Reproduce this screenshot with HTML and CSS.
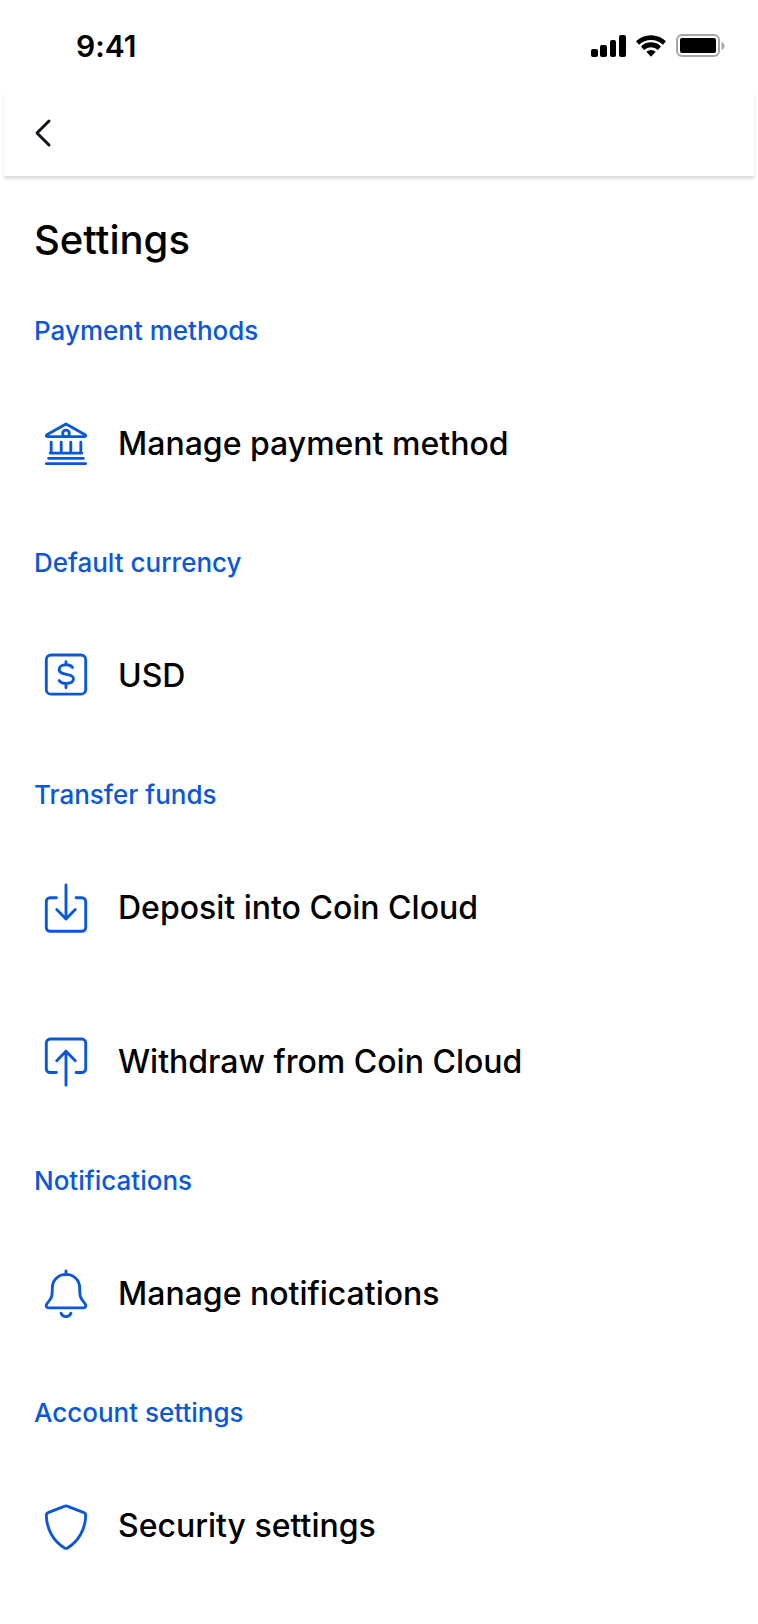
FILE: index.html
```html
<!DOCTYPE html>
<html lang="en">
<head>
    <meta charset="UTF-8">
    <meta name="viewport" content="width=device-width, initial-scale=1.0">
    <title>Settings</title>
    <link rel="stylesheet" href="styles.css">
</head>
<body>
    <div class="status-bar">
        <span class="time">9:41</span>
        <div class="status-icons">
            <svg width="36" height="24" viewBox="0 0 36 24">
                <rect x="1" y="15" width="7" height="8" rx="2"/>
                <rect x="10" y="11" width="7" height="12" rx="2"/>
                <rect x="20" y="6" width="6" height="17" rx="2"/>
                <rect x="29" y="1" width="7" height="22" rx="2"/>
            </svg>
            <svg width="32" height="24" viewBox="0 0 32 24">
                <path d="M1 7.300a21.500 21.500 0 0 1 30 0l-3 3.400a17.400 17.400 0 0 0-24 0z"/>
                <path d="M6 12.500a14 14 0 0 1 20 0l-3.100 3.400a10 10 0 0 0-13.800 0z"/>
                <path d="M11.300 17.700a7 7 0 0 1 9.400 0L16 22.800z"/>
            </svg>
            <svg width="50" height="24" viewBox="0 0 50 24">
                <rect class="battery-case" x="1" y="1" width="42" height="21" rx="5"/>
                <rect x="4" y="4" width="36" height="15" rx="2"/>
                <path class="battery-tip" d="M45.500 8v8c4-1.500 4-6.500 0-8z"/>
            </svg>
        </div>
    </div>

    <header class="top-bar">
        <button type="button" class="back" aria-label="Back">
            <svg width="18" height="30" viewBox="0 0 18 30"><path d="M15 3L3 15l12 12"/></svg>
        </button>
    </header>

    <main class="settings">
        <h1>Settings</h1>

        <section>
            <h2>Payment methods</h2>
            <a class="item" href="#payment">
                <svg class="icon" viewBox="-1 -1 46 54">
                    <path d="M22 5L2 16.300c-1 .6-.6 2 .6 2h38.800c1.200 0 1.600-1.400.6-2z"/>
                    <circle cx="22" cy="15" r="3.500"/>
                    <path d="M6.500 24v11M17 24v11M27 24v11M37.500 24v11M5.500 35.500h33M3.800 41h36.400M1.400 46.500h41.200"/>
                </svg>
                <span>Manage payment method</span>
            </a>
        </section>

        <section>
            <h2>Default currency</h2>
            <a class="item" href="#currency">
                <svg class="icon" viewBox="-1 -1 46 54">
                    <rect x="1.400" y="4" width="41.200" height="41" rx="5"/>
                    <path d="M28.800 17c-1.300-1.700-3.700-2.700-6.800-2.700-4.400 0-7.200 2-7.200 5 0 6.700 15 3.300 15 9.500 0 3-3 4.900-7.800 4.900-3.200 0-5.800-1-7.200-2.900M22 11v3.300M22 33.700v4.600"/>
                </svg>
                <span>USD</span>
            </a>
        </section>

        <section>
            <h2>Transfer funds</h2>
            <a class="item" href="#deposit">
                <svg class="icon" viewBox="-1 -1 46 54">
                    <path d="M12 15.300H5.400a4 4 0 0 0-4 4v27a4 4 0 0 0 4 4h33.200a4 4 0 0 0 4-4v-27a4 4 0 0 0-4-4H32.500"/>
                    <path d="M22 2v35.500M12.300 27.600l9.700 9.900 9.700-9.900"/>
                </svg>
                <span>Deposit into Coin Cloud</span>
            </a>
            <a class="item" href="#withdraw">
                <svg class="icon" viewBox="-1 -1 46 54">
                    <path d="M12 37H5.400a4 4 0 0 1-4-4V6a4 4 0 0 1 4-4h33.200a4 4 0 0 1 4 4v27a4 4 0 0 1-4 4H32.500"/>
                    <path d="M22 50.300V14.800M12.300 24.700l9.700-9.900 9.700 9.900"/>
                </svg>
                <span>Withdraw from Coin Cloud</span>
            </a>
        </section>

        <section>
            <h2>Notifications</h2>
            <a class="item" href="#notifications">
                <svg class="icon" viewBox="-1 -1 46 54">
                    <path d="M22 2v4M22 5.500C14 5.500 7.700 11.500 7.700 19.500c0 9-.4 10.500-5.300 16.300-2 2.200-1 4.700 1.600 4.700h36c2.600 0 3.600-2.500 1.600-4.700-4.900-5.800-5.300-7.300-5.300-16.300C36.300 11.500 30 5.500 22 5.500z"/>
                    <path d="M16.800 46c1.500 4.800 8.900 4.800 10.400 0"/>
                </svg>
                <span>Manage notifications</span>
            </a>
        </section>

        <section>
            <h2>Account settings</h2>
            <a class="item" href="#security">
                <svg class="icon" viewBox="-1 -1 46 54">
                    <path d="M20.800 5.200q1.200-.5 2.400 0L40.700 12q2 .8 1.900 2.800C42.300 30 34.500 42.500 23.500 49q-1.500.8-3 0C9.500 42.500 1.700 30 1.400 14.800q-.1-2 1.900-2.800z"/>
                </svg>
                <span>Security settings</span>
            </a>
        </section>
    </main>
</body>
</html>
```

FILE: styles.css
```css
body {
    font-family: 'Inter', sans-serif;
    font-variant-ligatures: none;
    background-color: #fff;
    color: #000;
    margin: 0;
    padding: 0;
}

.status-bar {
    position: relative;
    z-index: 1;
    display: flex;
    align-items: center;
    justify-content: space-between;
    height: 92px;
    padding: 0 32px 0 76px;
    box-sizing: border-box;
    background-color: #fff;
}

.time {
    font-size: 30px;
    font-weight: 600;
}

.status-icons {
    display: flex;
    gap: 9px;
}

.battery-case {
    fill: none;
    stroke: #a6a6a6;
    stroke-width: 2;
}

.battery-tip {
    fill: #a6a6a6;
}

.top-bar {
    display: flex;
    align-items: center;
    height: 84px;
    margin: 0 4px;
    padding: 0 30px 2px;
    box-sizing: border-box;
    background-color: #fff;
    box-shadow: 0 3px 3px rgba(0, 0, 0, 0.14);
}

.back {
    display: flex;
    padding: 0;
    border: none;
    background: none;
    cursor: pointer;
}

.back path {
    fill: none;
    stroke: #14141f;
    stroke-width: 3;
    stroke-linecap: round;
    stroke-linejoin: round;
}

.settings {
    padding: 40px 34px 20px;
}

h1 {
    margin: 0 0 25px;
    font-size: 40px;
    font-weight: 500;
    line-height: 48px;
}

h2 {
    margin: 0;
    padding: 26px 0 20px;
    font-size: 26px;
    font-weight: 500;
    line-height: 32px;
    color: #0b57db;
}

.item {
    display: flex;
    align-items: center;
    gap: 30px;
    padding: 51px 10px;
    font-size: 32px;
    font-weight: 500;
    line-height: 40px;
    color: #000;
    text-decoration: none;
}

.icon {
    flex: none;
    width: 44px;
    height: 52px;
    fill: none;
    stroke: #0b57db;
    stroke-width: 3;
    stroke-linecap: round;
    stroke-linejoin: round;
}
```
